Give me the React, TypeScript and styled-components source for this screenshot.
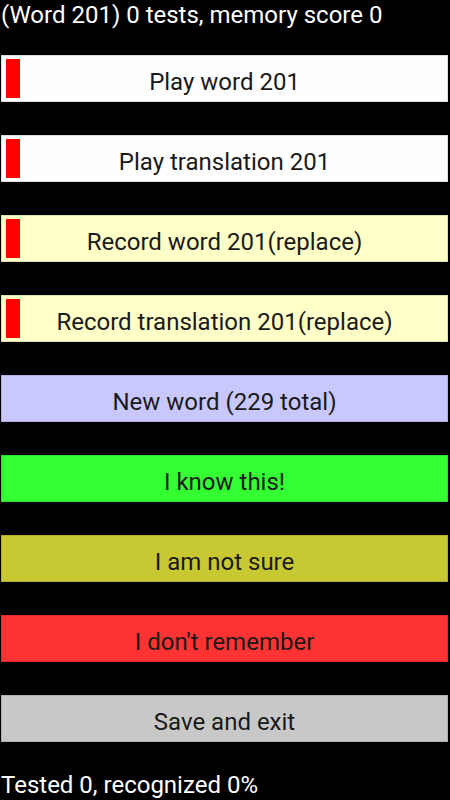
import React from 'react';
import styled, { createGlobalStyle } from 'styled-components';

const GlobalStyle = createGlobalStyle`
  html, body {
    margin: 0;
    padding: 0;
    background: #000;
  }
  body {
    font-family: Roboto, "Noto Sans", sans-serif;
  }
`;

interface WordButton {
  label: string;
  color: string;
  marker?: boolean;
}

const buttons: WordButton[] = [
  { label: 'Play word 201', color: '#fefefe', marker: true },
  { label: 'Play translation 201', color: '#fefefe', marker: true },
  { label: 'Record word 201(replace)', color: '#ffffc8', marker: true },
  { label: 'Record translation 201(replace)', color: '#ffffc8', marker: true },
  { label: 'New word (229 total)', color: '#c8c8ff' },
  { label: 'I know this!', color: '#33ff33' },
  { label: 'I am not sure', color: '#c8c832' },
  { label: "I don't remember", color: '#ff3333' },
  { label: 'Save and exit', color: '#c8c8c8' },
];

const App: React.FC = () => {
  return (
    <Screen>
      <GlobalStyle />
      <StatusLine>(Word 201) 0 tests, memory score 0</StatusLine>
      <ButtonList>
        {buttons.map((b) => (
          <ActionButton key={b.label} $bg={b.color}>
            {b.marker && <Marker />}
            {b.label}
          </ActionButton>
        ))}
      </ButtonList>
      <FooterLine>Tested 0, recognized 0%</FooterLine>
    </Screen>
  );
};

const Screen = styled.div`
  width: 450px;
  height: 800px;
  background: #000;
  display: flex;
  flex-direction: column;
  overflow: hidden;
`;

const StatusLine = styled.div`
  color: #fff;
  font-size: 24px;
  line-height: 30px;
  height: 30px;
  padding-left: 1px;
  white-space: nowrap;
`;

const ButtonList = styled.div`
  display: flex;
  flex-direction: column;
  gap: 33px;
  margin-top: 25px;
  padding: 0 2px 0 1px;
`;

const ActionButton = styled.button<{ $bg: string }>`
  position: relative;
  height: 47px;
  width: 100%;
  margin: 0;
  padding: 6px 0 0;
  border: 1px solid rgba(0, 0, 0, 0.12);
  background: ${(p) => p.$bg};
  color: #1a1a1a;
  font-family: Roboto, "Noto Sans", sans-serif;
  font-size: 24px;
  display: flex;
  align-items: center;
  justify-content: center;
  white-space: nowrap;
`;

const Marker = styled.span`
  position: absolute;
  left: 4px;
  top: 3px;
  bottom: 3px;
  width: 14px;
  background: #ff0000;
`;

const FooterLine = styled.div`
  color: #fff;
  font-size: 24px;
  line-height: 30px;
  margin-top: auto;
  padding-left: 1px;
  height: 30px;
  white-space: nowrap;
`;

export default App;
